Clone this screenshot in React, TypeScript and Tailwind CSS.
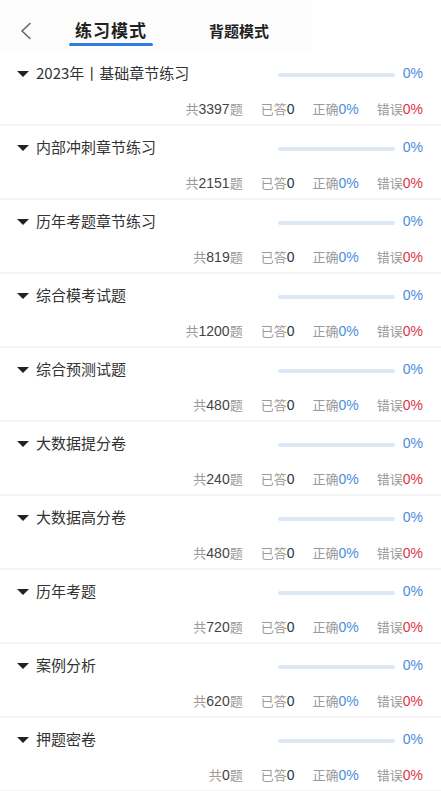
import React from "react";

const items = [
  { title: "2023年丨基础章节练习", total: "3397" },
  { title: "内部冲刺章节练习", total: "2151" },
  { title: "历年考题章节练习", total: "819" },
  { title: "综合模考试题", total: "1200" },
  { title: "综合预测试题", total: "480" },
  { title: "大数据提分卷", total: "240" },
  { title: "大数据高分卷", total: "480" },
  { title: "历年考题", total: "720" },
  { title: "案例分析", total: "620" },
  { title: "押题密卷", total: "0" },
];

const font = { fontFamily: '"Noto Sans CJK SC", "Noto Sans", sans-serif' };
const num = { fontFamily: '"Liberation Sans", sans-serif' };

export default function App() {
  return (
    <div className="w-[441px] h-[791px] bg-white overflow-hidden" style={font}>
      <div className="h-[52px] flex items-start bg-white">
        <div className="h-[52px] w-[312px] bg-[#fcfcfc] flex items-start relative">
          <svg className="absolute left-[19px] top-[22px]" width="13" height="18" viewBox="0 0 13 18">
            <path d="M11 1.5 L3 9 L11 16.5" fill="none" stroke="#666" strokeWidth="1.6" strokeLinecap="round" strokeLinejoin="round" />
          </svg>
          <div className="absolute left-[69px] top-[18px] w-[84px] flex flex-col items-center">
            <span className="text-[17px] leading-[24px] font-bold text-[#222] tracking-[1px]">练习模式</span>
            <div className="mt-[1px] h-[3px] w-[84px] rounded-full bg-[#2f7de1]" />
          </div>
          <span className="absolute left-[209px] top-[20px] text-[15px] leading-[22px] font-bold text-[#222]">背题模式</span>
        </div>
      </div>
      {items.map((it, i) => (
        <div key={i} className="border-b-2 border-[#f3f3f3]">
          <div className="h-[42px] flex items-center pl-[17px] pr-[18px]">
            <svg width="12" height="6" viewBox="0 0 12 6" className="mt-[1px]">
              <path d="M0 0 L12 0 L6 6 Z" fill="#222" />
            </svg>
            <span className="ml-[7px] text-[15px] text-[#333] flex-1">{it.title}</span>
            <div className="w-[117px] h-[4px] rounded-full bg-[#dce8f6] mt-[4px]" />
            <span className="ml-[8px] text-[14px] text-[#4a8de0]" style={num}>0%</span>
          </div>
          <div className="h-[30px] flex items-center justify-end pr-[18px] text-[13px] text-[#9a9a9a] gap-[18px]">
            <span>
              共<span className="text-[14px] text-[#444]" style={num}>{it.total}</span>题
            </span>
            <span>
              已答<span className="text-[14px] text-[#333]" style={num}>0</span>
            </span>
            <span>
              正确<span className="text-[14px] text-[#4a8de0]" style={num}>0%</span>
            </span>
            <span>
              错误<span className="text-[14px] text-[#e0333f]" style={num}>0%</span>
            </span>
          </div>
        </div>
      ))}
    </div>
  );
}
